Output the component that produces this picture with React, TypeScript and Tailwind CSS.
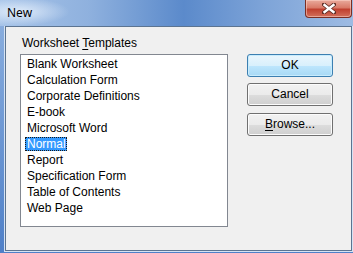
import React from 'react';

const templates = [
  'Blank Worksheet',
  'Calculation Form',
  'Corporate Definitions',
  'E-book',
  'Microsoft Word',
  'Normal',
  'Report',
  'Specification Form',
  'Table of Contents',
  'Web Page',
];

const selected = 'Normal';

const btnBase =
  'w-[86px] h-[23px] rounded-[3px] border text-[12px] leading-[21px] text-black text-center';

export default function App() {
  return (
    <div className="w-[353px] h-[253px] overflow-hidden bg-gradient-to-b from-[#8fb2e0] to-[#4f80c8] font-['Liberation_Sans',Arial,sans-serif]">
      {/* Title bar */}
      <div className="relative h-[26px] flex items-start justify-between bg-[linear-gradient(90deg,#a6c3e8_0%,#8fb1de_25%,#5b8acb_52%,#7ea4d8_75%,#9dbbe3_100%)]">
        <div className="absolute left-0 top-0 w-[70px] h-[26px] bg-[radial-gradient(ellipse_at_25%_45%,rgba(230,240,252,0.9)_0%,rgba(230,240,252,0)_70%)]" />
        <span className="relative pl-[7px] pt-[6px] text-[12px] leading-[14px] text-black font-['Noto_Sans',sans-serif]">
          New
        </span>
        <button className="relative mr-[1px] w-[47px] h-[18px] rounded-b-[4px] border border-t-0 border-[#7a2e24] bg-[linear-gradient(180deg,#e9aa9c_0%,#d97a68_45%,#c0402f_55%,#d2705c_100%)] shadow-[inset_0_0_0_1px_rgba(255,220,210,0.5)] flex items-center justify-center">
          <svg width="14" height="11" viewBox="0 0 14 11">
            <path d="M2 1.5 L12 9.5 M12 1.5 L2 9.5" stroke="#5a2a22" strokeWidth="4" strokeLinecap="square" />
            <path d="M2.5 2 L11.5 9 M11.5 2 L2.5 9" stroke="#ffffff" strokeWidth="2.4" strokeLinecap="square" />
          </svg>
        </button>
      </div>

      {/* Client area */}
      <div className="ml-[5px] w-[347px] h-[225px] bg-[#f0f0f0] border border-[#5c7491] shadow-[0_0_0_1px_#d6e3f3] flex">
        {/* Template list */}
        <div className="ml-[14px] pt-[9px]">
          <div className="ml-[2px] mb-[4px] h-[14px] text-[12px] leading-[14px] text-black">
            Worksheet <span className="underline underline-offset-2">T</span>emplates
          </div>
          <div className="w-[208px] h-[173px] bg-white border border-[#828790] pt-[1px] pl-[6px]">
            {templates.map(t => (
              <div key={t} className="h-[16px] text-[12px] leading-[16px] text-black whitespace-nowrap">
                {t === selected ? (
                  <span className="inline-block -ml-[2px] pl-[1px] pr-[0px] h-[14px] leading-[12px] bg-[#3399ff] text-white border border-dotted border-[#1a1a1a]">
                    {t}
                  </span>
                ) : (
                  t
                )}
              </div>
            ))}
          </div>
        </div>

        {/* Buttons */}
        <div className="ml-[19px] pt-[27px] flex flex-col gap-[6px]">
          <button
            className={`${btnBase} border-[#3c7fb1] bg-[linear-gradient(180deg,#eaf6fd_0%,#d9f0fc_50%,#bee6fd_51%,#a7d9f5_100%)] shadow-[inset_0_0_0_1px_#c8ecfd]`}
          >
            OK
          </button>
          <button
            className={`${btnBase} border-[#707070] bg-[linear-gradient(180deg,#f2f2f2_0%,#ebebeb_50%,#dddddd_51%,#cfcfcf_100%)] shadow-[inset_0_0_0_1px_#fcfcfc]`}
          >
            Cancel
          </button>
          <button
            className={`${btnBase} mt-[1px] border-[#707070] bg-[linear-gradient(180deg,#f2f2f2_0%,#ebebeb_50%,#dddddd_51%,#cfcfcf_100%)] shadow-[inset_0_0_0_1px_#fcfcfc]`}
          >
            <span className="underline underline-offset-2">B</span>rowse...
          </button>
        </div>
      </div>
    </div>
  );
}
